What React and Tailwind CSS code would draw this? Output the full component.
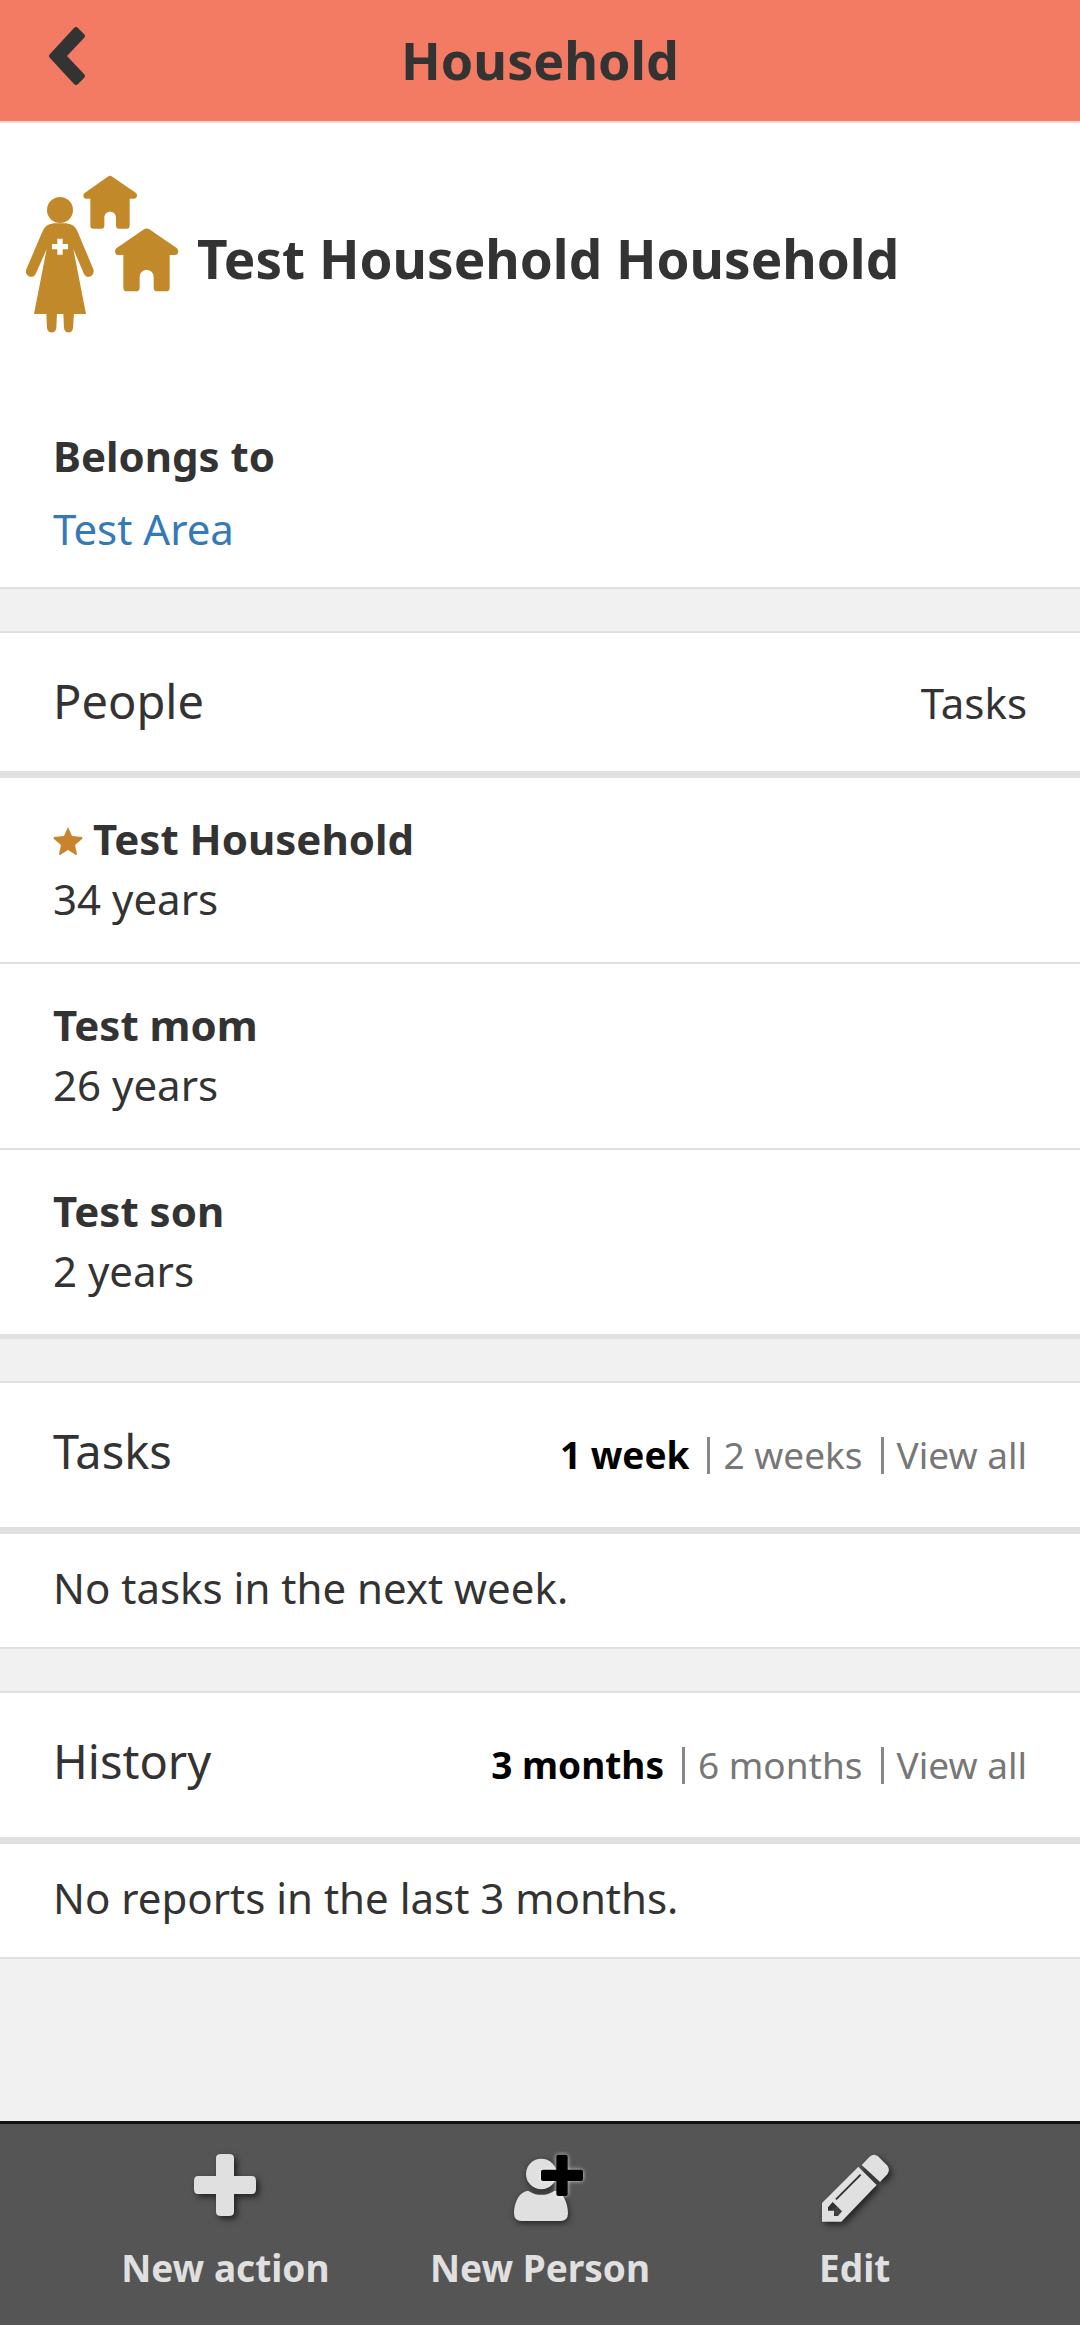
import React, { useState } from 'react'

const people = [
    { name: 'Test Household', age: '34 years', primary: true },
    { name: 'Test mom', age: '26 years' },
    { name: 'Test son', age: '2 years' },
]

function HouseholdIcon() {
    return (
        <svg viewBox="0 0 480 510" className="h-[170px] w-[160px] shrink-0" fill="#c1892a" aria-hidden="true">
            <circle cx="120" cy="120" r="39" />
            <path d="M102 160h36q25 1 35 25l47 113c6 19-18 32-28 14l-32-75 38 195H42l38-195-33 75c-10 18-35 5-28-14l48-113q10-24 35-25z" />
            <path d="M79 430h32l-2 44c-2 18-26 18-28 0zM130 430h32l-3 44c-2 18-25 18-27 0z" />
            <path d="M112 206h16v16h16v16h-16v16h-16v-16H96v-16h16z" fill="#fff" />
            <path d="M263 20q7-5 14 0l71 49q4 4 3 10-2 7-9 7h-13v81q0 9-9 9h-23q-9 0-9-9v-24c0-24-35-24-35 0v24q0 9-9 9h-24q-9 0-9-9V86h-13q-7 0-8-7-1-6 4-10z" />
            <path d="M372 178q8-5 16 0l83 57q4 4 4 10-1 9-10 10h-16v98q0 11-11 11h-26q-11 0-11-11v-31c0-29-42-29-42 0v31q0 11-11 11h-27q-11 0-11-11v-98h-16q-8-1-9-10 0-6 4-10z" />
        </svg>
    )
}

function StarIcon() {
    return (
        <svg viewBox="0 0 30 34" className="h-[34px] w-[30px]" fill="#c9832e" aria-hidden="true">
            <path d="M15 5l4 9 10 1q1 1 0 2l-7 6 2 9q0 1-1 1l-8-5-8 5q-1 0-1-1l2-9-7-6q-1-1 0-2l10-1z" />
        </svg>
    )
}

function PlusIcon() {
    return (
        <svg viewBox="0 0 62 62" className="h-[62px] w-[62px] overflow-visible drop-shadow-[3px_3px_3px_rgba(0,0,0,0.6)]" fill="currentColor" aria-hidden="true">
            <path d="M27 0h8q5 0 5 4v18h18q4 0 4 5v8q0 5-4 5H40v18q0 4-5 4h-8q-5 0-5-4V40H4q-4 0-4-5v-8q0-5 4-5h18V4q0-4 5-4z" />
        </svg>
    )
}

function PersonIcon() {
    return (
        <svg viewBox="27 42 186 186" className="h-[62px] w-[62px] overflow-visible" aria-hidden="true">
            <g fill="currentColor" className="drop-shadow-[3px_6px_9px_rgba(0,0,0,0.6)]">
                <circle cx="124" cy="102" r="46" />
                <path d="M84 152q40 25 80 0c22 2 40 32 40 68q0 23-23 23H65q-23 0-23-23c0-36 18-66 42-68z" />
            </g>
            <path
                d="M175 44h22q6 0 6 6v39h40q6 0 6 6v22q0 6-6 6h-40v39q0 6-6 6h-22q-6 0-6-6v-39h-40q-6 0-6-6V95q0-6 6-6h40V50q0-6 6-6z"
                fill="#000"
                className="drop-shadow-[0_0_6px_rgba(255,255,255,0.8)]"
            />
        </svg>
    )
}

function PencilIcon() {
    return (
        <svg viewBox="42 42 186 186" className="h-[62px] w-[62px] overflow-visible drop-shadow-[3px_3px_3px_rgba(0,0,0,0.6)]" fill="currentColor" fillRule="evenodd" aria-hidden="true">
            <path d="M155 75l24-25q12-11 25-1l27 27q11 12 1 27l-22 23z" />
            <path d="M145 80l55 55L94 245H36v-56zM150 102l-74 74 4 4 74-74zM68 186l-14 16v10h18v16h12l12-14z" />
        </svg>
    )
}

function Filters({ label, options }) {
    const [selected, setselected] = useState(options[0])
    return (
        <div className="flex text-[37px] leading-[72px]" role="group" aria-label={label}>
            {options.map((option, i) => (
                <React.Fragment key={option}>
                    {i > 0 && <span className="mr-[13px] ml-[18px] h-[37px] w-[3px] self-center bg-[#888888]" />}
                    <button
                        onClick={() => setselected(option)}
                        className={'cursor-pointer ' + (selected === option ? 'font-bold text-black' : 'text-[#777777]')}
                    >
                        {option}
                    </button>
                </React.Fragment>
            ))}
        </div>
    )
}

function Card({ title, right, children }) {
    return (
        <section className="mt-[42px] border-y-2 border-[#e0e0e0] bg-white">
            <div className="flex items-baseline justify-between border-b-[7px] border-[#e0e0e0] px-[53px] pt-[34px] pb-[36px]">
                <h2 className="text-[47px] leading-[68px]">{title}</h2>
                {right}
            </div>
            {children}
        </section>
    )
}

function ActionButton({ icon, label }) {
    return (
        <button className="flex flex-1 cursor-pointer flex-col items-center gap-[22px]">
            {icon}
            {label}
        </button>
    )
}

export default function App() {
    return (
        <div className="flex min-h-screen flex-col bg-[#f1f1f1] font-['Noto_Sans',sans-serif] text-[42px] leading-[60px] text-[#333333]">
            <header className="grid grid-cols-[1fr_auto_1fr] items-center border-b-2 border-[#fbd5ce] bg-[#f47b63] px-[48px] pt-[24px] pb-[26px]">
                <button className="w-[38px] cursor-pointer pb-[8px]" aria-label="Back">
                    <svg viewBox="0 0 38 58" className="h-[58px] w-[38px]" fill="#333333" aria-hidden="true">
                        <path d="M26 1q2-2 4 0l6 6q2 2 0 4L19 29l17 18q2 2 0 4l-6 6q-2 2-4 0L2 31q-2-2 0-4z" />
                    </svg>
                </button>
                <h1 className="text-[52px] leading-[71px] font-bold">Household</h1>
            </header>

            <main className="grow">
                <section className="border-b-2 border-[#e0e0e0] bg-white">
                    <div className="flex items-center gap-[17px] px-[20px] pt-[47px]">
                        <HouseholdIcon />
                        <h2 className="pt-[7px] text-[53px] leading-[71px] font-bold">Test Household Household</h2>
                    </div>
                    <dl className="px-[53px] pt-[86px] pb-[28px]">
                        <dt className="mb-[13px] font-bold">Belongs to</dt>
                        <dd>
                            <a href="#area" className="text-[#337ab7]">Test Area</a>
                        </dd>
                    </dl>
                </section>

                <Card title="People" right={<span>Tasks</span>}>
                    <ul className="divide-y-2 divide-[#e0e0e0] border-b-3 border-[#e0e0e0]">
                        {people.map((person) => (
                            <li key={person.name} className="px-[53px] pt-[31px] pb-[33px]">
                                <p className="flex items-center gap-[10px] font-bold">
                                    {person.primary && <StarIcon />}
                                    {person.name}
                                </p>
                                <p>{person.age}</p>
                            </li>
                        ))}
                    </ul>
                </Card>

                <Card title="Tasks" right={<Filters label="Tasks range" options={['1 week', '2 weeks', 'View all']} />}>
                    <p className="px-[53px] pt-[24px] pb-[29px]">No tasks in the next week.</p>
                </Card>

                <Card title="History" right={<Filters label="History range" options={['3 months', '6 months', 'View all']} />}>
                    <p className="px-[53px] pt-[24px] pb-[29px]">No reports in the last 3 months.</p>
                </Card>
            </main>

            <footer className="flex border-t-3 border-[#111111] bg-[#555555] px-[68px] pt-[30px] pb-[27px] text-[37px] font-bold text-[#e0e0e0] text-shadow-[3px_3px_4px_rgba(0,0,0,0.6)]">
                <ActionButton icon={<PlusIcon />} label="New action" />
                <ActionButton icon={<PersonIcon />} label="New Person" />
                <ActionButton icon={<PencilIcon />} label="Edit" />
            </footer>
        </div>
    )
}
